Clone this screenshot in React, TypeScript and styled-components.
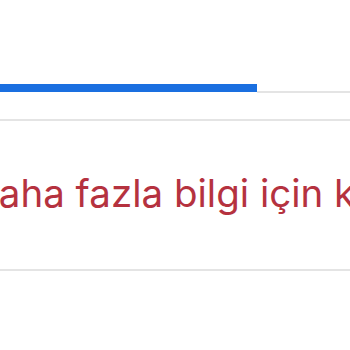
import React from "react";
import styled, { createGlobalStyle } from "styled-components";

const Global = createGlobalStyle`
  html, body { margin: 0; padding: 0; background: #ffffff; }
  body { font-family: Inter, "Noto Sans", sans-serif; overflow: hidden; }
`;

const Page = styled.div`
  width: 350px;
  height: 350px;
  overflow: hidden;
  display: flex;
  flex-direction: column;
  padding-top: 83px;
  box-sizing: border-box;
`;

const Track = styled.div`
  display: flex;
  align-items: flex-end;
  height: 10px;
`;

const Fill = styled.div<{ $pct: number }>`
  width: ${(p) => p.$pct}%;
  height: 8px;
  margin-bottom: 1px;
  background: #1a6fe0;
`;

const Rest = styled.div`
  flex: 1;
  height: 2px;
  background: #e4e4e4;
`;

const Divider = styled.div<{ $top: number }>`
  margin-top: ${(p) => p.$top}px;
  height: 2px;
  background: #e4e4e4;
`;

const Notice = styled.div`
  height: 148px;
  display: flex;
  align-items: center;
  overflow: hidden;
`;

const NoticeText = styled.p`
  margin: 0 0 4px -29px;
  white-space: nowrap;
  font-size: 38.5px;
  font-weight: 400;
  color: #b5323f;
`;

export default function App() {
  return (
    <>
      <Global />
      <Page>
        <Track>
          <Fill $pct={73.5} />
          <Rest />
        </Track>
        <Divider $top={26} />
        <Notice>
          <NoticeText>Daha fazla bilgi için kliniğimizle iletişime geçin.</NoticeText>
        </Notice>
        <Divider $top={0} />
      </Page>
    </>
  );
}
